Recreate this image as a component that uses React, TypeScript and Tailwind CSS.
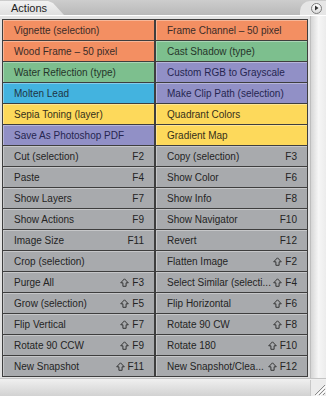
import React from 'react';

type Tone = 'orange' | 'green' | 'purple' | 'blue' | 'yellow' | 'gray';

type Action = {
  label: string;
  tone: Tone;
  fkey?: string;
  shift?: boolean;
};

const toneClass: Record<Tone, string> = {
  orange: 'bg-[#f38f62] text-[#3a2c28]',
  green: 'bg-[#7dbf8e] text-[#25352a]',
  purple: 'bg-[#9190c6] text-[#262650]',
  blue: 'bg-[#43b3df] text-[#1f3344]',
  yellow: 'bg-[#fdd95b] text-[#36301a]',
  gray: 'bg-[#a8aaad] text-[#242424]',
};

// left / right pairs, row by row
const rows: [Action, Action][] = [
  [
    { label: 'Vignette (selection)', tone: 'orange' },
    { label: 'Frame Channel – 50 pixel', tone: 'orange' },
  ],
  [
    { label: 'Wood Frame – 50 pixel', tone: 'orange' },
    { label: 'Cast Shadow (type)', tone: 'green' },
  ],
  [
    { label: 'Water Reflection (type)', tone: 'green' },
    { label: 'Custom RGB to Grayscale', tone: 'purple' },
  ],
  [
    { label: 'Molten Lead', tone: 'blue' },
    { label: 'Make Clip Path (selection)', tone: 'purple' },
  ],
  [
    { label: 'Sepia Toning (layer)', tone: 'yellow' },
    { label: 'Quadrant Colors', tone: 'yellow' },
  ],
  [
    { label: 'Save As Photoshop PDF', tone: 'purple' },
    { label: 'Gradient Map', tone: 'yellow' },
  ],
  [
    { label: 'Cut (selection)', tone: 'gray', fkey: 'F2' },
    { label: 'Copy (selection)', tone: 'gray', fkey: 'F3' },
  ],
  [
    { label: 'Paste', tone: 'gray', fkey: 'F4' },
    { label: 'Show Color', tone: 'gray', fkey: 'F6' },
  ],
  [
    { label: 'Show Layers', tone: 'gray', fkey: 'F7' },
    { label: 'Show Info', tone: 'gray', fkey: 'F8' },
  ],
  [
    { label: 'Show Actions', tone: 'gray', fkey: 'F9' },
    { label: 'Show Navigator', tone: 'gray', fkey: 'F10' },
  ],
  [
    { label: 'Image Size', tone: 'gray', fkey: 'F11' },
    { label: 'Revert', tone: 'gray', fkey: 'F12' },
  ],
  [
    { label: 'Crop (selection)', tone: 'gray' },
    { label: 'Flatten Image', tone: 'gray', fkey: 'F2', shift: true },
  ],
  [
    { label: 'Purge All', tone: 'gray', fkey: 'F3', shift: true },
    { label: 'Select Similar (selecti...', tone: 'gray', fkey: 'F4', shift: true },
  ],
  [
    { label: 'Grow (selection)', tone: 'gray', fkey: 'F5', shift: true },
    { label: 'Flip Horizontal', tone: 'gray', fkey: 'F6', shift: true },
  ],
  [
    { label: 'Flip Vertical', tone: 'gray', fkey: 'F7', shift: true },
    { label: 'Rotate 90 CW', tone: 'gray', fkey: 'F8', shift: true },
  ],
  [
    { label: 'Rotate 90 CCW', tone: 'gray', fkey: 'F9', shift: true },
    { label: 'Rotate 180', tone: 'gray', fkey: 'F10', shift: true },
  ],
  [
    { label: 'New Snapshot', tone: 'gray', fkey: 'F11', shift: true },
    { label: 'New Snapshot/Clea...', tone: 'gray', fkey: 'F12', shift: true },
  ],
];

// outlined shift arrow
function ShiftIcon() {
  return (
    <svg width="9" height="9" viewBox="0 0 9 9" className="mr-[3px]">
      <path
        d="M4.5 0.8 L8.3 4.8 H6.1 V8.3 H2.9 V4.8 H0.7 Z"
        fill="none"
        stroke="#2a2a2a"
        strokeWidth="0.9"
        strokeLinejoin="miter"
      />
    </svg>
  );
}

function ActionCell({ action }: { action: Action }) {
  return (
    <div
      className={`flex h-5 items-center justify-between overflow-hidden border-t border-l border-white/35 pl-[10px] pr-[10px] whitespace-nowrap ${toneClass[action.tone]}`}
    >
      <span>{action.label}</span>
      {action.fkey && (
        <span className="flex items-center">
          {action.shift && <ShiftIcon />}
          {action.fkey}
        </span>
      )}
    </div>
  );
}

function ResizeGrip() {
  return (
    <svg width="14" height="14" viewBox="0 0 14 14">
      <g stroke="#8a8a8a" strokeWidth="1">
        <line x1="13" y1="3" x2="3" y2="13" />
        <line x1="13" y1="7" x2="7" y2="13" />
        <line x1="13" y1="11" x2="11" y2="13" />
      </g>
      <g stroke="#ffffff" strokeWidth="1">
        <line x1="14" y1="4" x2="4" y2="14" />
        <line x1="14" y1="8" x2="8" y2="14" />
      </g>
    </svg>
  );
}

export default function App() {
  return (
    <div
      className="flex h-[396px] w-[326px] flex-col overflow-hidden bg-[#e3e3e3] text-[10px] leading-none"
      style={{ fontFamily: '"Liberation Sans", "DejaVu Sans", sans-serif' }}
    >
      {/* Tab strip */}
      <div className="flex h-4 items-end justify-between bg-gradient-to-b from-[#cdcdcd] to-[#b9b9b9] border-b border-white">
        <div className="flex h-[14px] w-[64px] items-center bg-gradient-to-b from-[#f2f2f2] to-[#e0e0e0] pl-[11px] text-[11px] text-[#1e1e1e] [clip-path:polygon(0_0,48px_0,53px_2px,64px_14px,0_14px)]">
          Actions
        </div>
        <div className="flex h-[14px] w-[26px] items-center justify-end rounded-tl-[10px] bg-[#e6e6e6] pr-[4px]">
          <div className="flex h-[11px] w-[11px] items-center justify-center rounded-full border border-[#7c7c7c] bg-gradient-to-b from-white to-[#dcdcdc]">
            <svg width="5" height="6" viewBox="0 0 5 6">
              <path d="M1 0.5 L4.5 3 L1 5.5 Z" fill="#333" />
            </svg>
          </div>
        </div>
      </div>

      {/* Body */}
      <div className="flex flex-1">
        <div className="flex-1 px-[2px] pt-[3px]">
          <div className="grid grid-cols-2 gap-x-[2px] gap-y-px border border-[#3e3e3e] bg-[#3e3e3e]">
            {rows.map(([left, right], i) => (
              <React.Fragment key={i}>
                <ActionCell action={left} />
                <ActionCell action={right} />
              </React.Fragment>
            ))}
          </div>
        </div>
        <div className="w-4 border-l border-[#bdbdbd] bg-gradient-to-r from-[#d6d6d6] via-[#f6f6f6] to-[#ececec]" />
      </div>

      {/* Footer */}
      <div className="flex h-[18px] items-end justify-end border-t border-[#c4c4c4] bg-gradient-to-b from-[#f0f0f0] to-[#d2d2d2]">
        <div className="flex h-[16px] w-4 items-end justify-end border-l border-[#c8c8c8] bg-[#ececec]">
          <ResizeGrip />
        </div>
      </div>
    </div>
  );
}
